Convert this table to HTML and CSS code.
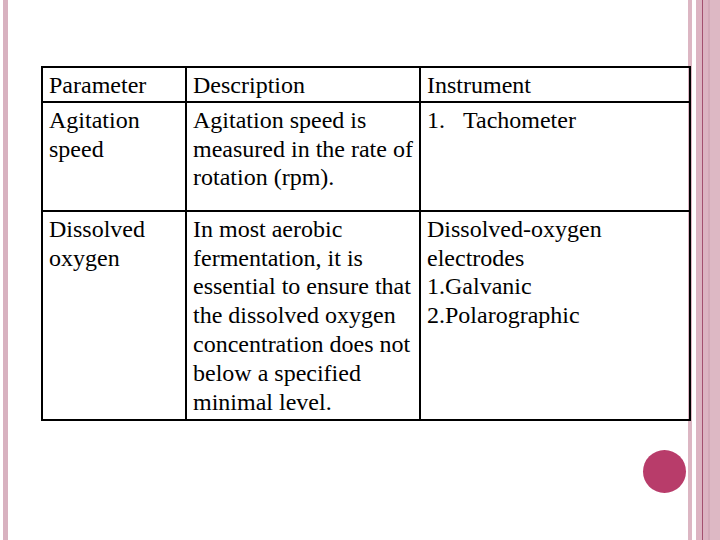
FILE: index.html
```html
<!DOCTYPE html>
<html>
<head>
<meta charset="utf-8">
<link rel="stylesheet" href="styles.css">
</head>
<body>
<div class="slide">
  <table class="grid">
    <tr class="head">
      <td class="c1">Parameter</td>
      <td class="c2">Description</td>
      <td class="c3">Instrument</td>
    </tr>
    <tr class="r2">
      <td>Agitation speed</td>
      <td>Agitation speed is measured in the rate of rotation (rpm).</td>
      <td><span class="num">1.</span>Tachometer</td>
    </tr>
    <tr class="r3">
      <td>Dissolved oxygen</td>
      <td>In most aerobic fermentation, it is essential to ensure that the dissolved oxygen concentration does not below a specified minimal level.</td>
      <td>Dissolved-oxygen electrodes<br>1.Galvanic<br>2.Polarographic</td>
    </tr>
  </table>
  <div class="dot"></div>
</div>
</body>
</html>
```
FILE: styles.css
```css
html, body {
  margin: 0;
  padding: 0;
}
body {
  width: 720px;
  height: 540px;
  overflow: hidden;
  font-family: "Liberation Serif", serif;
  color: #000;
  background-color: #fff;
  background-image: linear-gradient(to right,
      #ffffff 0px, #ffffff 3px,
      #d8b2c0 3px, #d8b2c0 8px,
      #ffffff 8px, #ffffff 688px,
      #dcb6c3 688px, #dcb6c3 692px,
      #ffffff 692px, #ffffff 696px,
      #dcb4c2 696px, #dcb4c2 702px,
      #a3506f 702px, #a3506f 703px,
      #dcb4c2 703px, #dcb4c2 708px,
      #d3a9b8 708px, #d3a9b8 710px,
      #ddb8c4 710px, #ddb8c4 720px);
}
.slide {
  padding: 66px 0 0 41px;
}
.grid {
  border-collapse: separate;
  border-spacing: 0;
  table-layout: fixed;
  width: 650px;
  border-top: 2px solid #000;
  border-left: 2px solid #000;
}
.grid td {
  box-sizing: border-box;
  border-right: 2px solid #000;
  border-bottom: 2px solid #000;
  padding: 3px 2px 1px 6px;
  vertical-align: top;
  font-family: "Liberation Serif", serif;
  font-size: 24px;
  line-height: 28.8px;
}
.grid .c1 { width: 144px; }
.grid .c2 { width: 234px; }
.grid .c3 { width: 270px; }
.head td { height: 34px; }
.r2 td { height: 109px; }
.r3 td { height: 209px; }
.num {
  display: inline-block;
  width: 36px;
}
.dot {
  width: 43px;
  height: 43px;
  border-radius: 50%;
  background: #b83c6a;
  margin: 29px 0 0 602px;
}
```
